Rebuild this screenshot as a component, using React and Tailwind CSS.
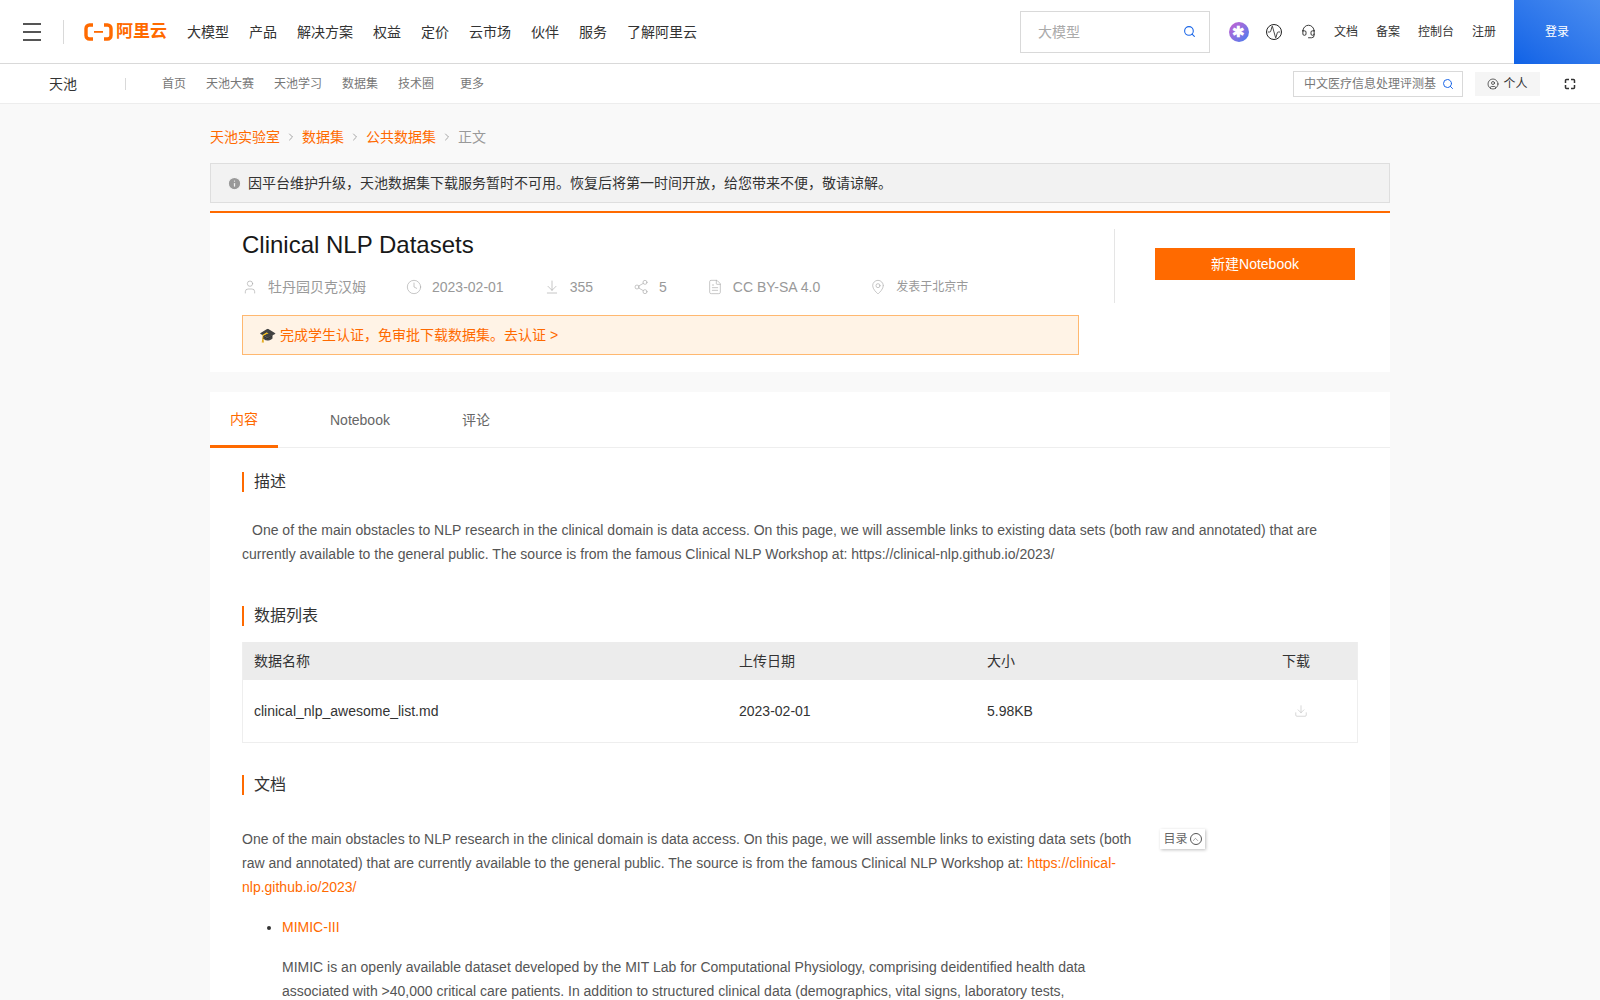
import { Search, User, Clock, ArrowDownToLine, Share2, FileText, MapPin, ChevronRight, ChevronUp, Info, Download, CircleUser, Headset, Activity } from "lucide-react";

const mainNav = ["大模型", "产品", "解决方案", "权益", "定价", "云市场", "伙伴", "服务", "了解阿里云"];
const subNav = [
  ["首页", "mr-5"],
  ["天池大赛", "mr-5"],
  ["天池学习", "mr-5"],
  ["数据集", "mr-5"],
  ["技术圈", "mr-[26px]"],
  ["更多", ""],
];

function Logo() {
  return (
    <div className="flex items-center gap-[3px] text-[#ff6a00]">
      <svg width="29" height="18" viewBox="0 0 29 18" fill="none">
        <path d="M9 2H5.5C3.5 2 2 3.5 2 5.5v7C2 14.5 3.5 16 5.5 16H9" stroke="#ff6a00" strokeWidth="3.4" />
        <path d="M20 2h3.500C25.500 2 27 3.500 27 5.500v7c0 2-1.500 3.500-3.500 3.500H20" stroke="#ff6a00" strokeWidth="3.400" />
        <rect x="10" y="8" width="9" height="1.800" fill="#ff6a00" />
      </svg>
      <span className="text-[17px] font-bold leading-none">阿里云</span>
    </div>
  );
}

function TopBar() {
  return (
    <header className="flex h-[64px] items-center border-b border-[#d9d9d9] bg-white">
      <div className="ml-[23px] flex w-[18px] flex-col gap-[6px]">
        <span className="h-[2px] bg-[#555]" />
        <span className="h-[2px] bg-[#555]" />
        <span className="h-[2px] bg-[#555]" />
      </div>
      <div className="ml-[22px] h-6 w-px bg-[#d9d9d9]" />
      <div className="ml-5">
        <Logo />
      </div>
      <nav className="ml-5 flex gap-5 text-sm text-[#333]">
        {mainNav.map((item) => (
          <span key={item}>{item}</span>
        ))}
      </nav>
      <div className="ml-auto flex h-[42px] w-[190px] items-center justify-between border border-[#d9d9d9] pl-[17px] pr-[13px] text-sm text-[#aaa]">
        <span>大模型</span>
        <Search size={13} color="#1a66e8" />
      </div>
      <div className="ml-[19px] flex h-5 w-5 items-center justify-center rounded-full bg-gradient-to-br from-[#c65bd0] to-[#2f7bf0] text-[15px] font-bold leading-none text-white">
        ✱
      </div>
      <Activity size={14} strokeWidth={1.4} color="#222" className="ml-[18px] rounded-full outline outline-1 outline-[#222]" />
      <Headset size={15} strokeWidth={1.4} color="#222" className="ml-[20px]" />
      <div className="ml-[18px] flex gap-[18px] text-xs text-[#333]">
        <span>文档</span>
        <span>备案</span>
        <span>控制台</span>
        <span>注册</span>
      </div>
      <button className="ml-[18px] h-[64px] w-[86px] bg-gradient-to-tr from-[#0f62e6] to-[#4a8df0] text-xs text-white">登录</button>
    </header>
  );
}

function SubBar() {
  return (
    <div className="flex h-[40px] items-center border-b border-[#ededed] bg-white">
      <span className="ml-[49px] text-sm text-[#333]">天池</span>
      <div className="ml-12 h-3 w-px bg-[#d9d9d9]" />
      <nav className="ml-9 flex text-xs text-[#777]">
        {subNav.map(([item, cls]) => (
          <span key={item} className={cls}>{item}</span>
        ))}
      </nav>
      <div className="ml-auto flex h-[26px] w-[170px] items-center justify-between border border-[#d9d9d9] pl-[10px] pr-2 text-xs text-[#777]">
        <span className="w-[132px] overflow-hidden whitespace-nowrap">中文医疗信息处理评测基准</span>
        <Search size={12} color="#1a66e8" />
      </div>
      <div className="ml-3 flex h-6 w-[65px] items-center justify-center gap-1 bg-[#f5f5f5] text-xs text-[#333]">
        <CircleUser size={12} strokeWidth={1.5} />
        <span>个人</span>
      </div>
      <svg className="ml-[24px] mr-[24px]" width="12" height="12" viewBox="0 0 12 12" fill="none" stroke="#333" strokeWidth="1.5">
        <path d="M5 1.500H2.500a1 1 0 0 0-1 1V5M7 1.500h2.500a1 1 0 0 1 1 1V5M5 10.500H2.500a1 1 0 0 1-1-1V7M7 10.500h2.500a1 1 0 0 0 1-1V7" />
      </svg>
    </div>
  );
}

function Breadcrumb() {
  const Sep = () => <ChevronRight size={12} strokeWidth={1.5} color="#888" className="mx-[5px]" />;
  return (
    <div className="flex h-[20px] items-center text-sm text-[#ff6a00]">
      <span>天池实验室</span>
      <Sep />
      <span>数据集</span>
      <Sep />
      <span>公共数据集</span>
      <Sep />
      <span className="text-[#999]">正文</span>
    </div>
  );
}

function MetaItem({ icon: Icon, children, className = "" }) {
  return (
    <div className={`flex items-center gap-[10px] ${className}`}>
      <Icon size={16} strokeWidth={1} color="#aaa" />
      {children}
    </div>
  );
}

function SectionTitle({ children }) {
  return (
    <h3 className="border-l-2 border-[#ff6a00] pl-[10px] text-base leading-5 text-[#333]">{children}</h3>
  );
}

function DatasetHead() {
  return (
    <section className="border-t-2 border-[#ff6a00] bg-white pb-[17px] pl-8 pr-[35px] pt-4">
      <div className="flex">
        <div className="w-[837px] shrink-0">
          <h1 className="text-2xl leading-8 text-[#181818]">Clinical NLP Datasets</h1>
          <div className="mt-[10px] flex h-8 items-center gap-10 text-sm text-[#999]">
            <MetaItem icon={User}>牡丹园贝克汉姆</MetaItem>
            <MetaItem icon={Clock}>2023-02-01</MetaItem>
            <MetaItem icon={ArrowDownToLine}>355</MetaItem>
            <MetaItem icon={Share2}>5</MetaItem>
            <MetaItem icon={FileText}>CC BY-SA 4.0</MetaItem>
            <MetaItem icon={MapPin} className="ml-[10px]">
              <span className="text-xs">发表于北京市</span>
            </MetaItem>
          </div>
          <div className="mt-[12px] flex h-10 items-center border border-[#ffb870] bg-[#fff3e6] px-4 text-sm text-[#ff6a00]">
            <span className="mr-1 text-[#333]">🎓</span>
            完成学生认证，免审批下载数据集。去认证 &gt;
          </div>
        </div>
        <div className="ml-[35px] h-[74px] border-l border-[#e5e5e5] pl-10 pt-[19px]">
          <button className="h-8 w-[200px] bg-[#ff6a00] text-sm text-white">新建Notebook</button>
        </div>
      </div>
    </section>
  );
}

function DataTable() {
  return (
    <div className="mt-[16px] border border-t-0 border-[#eeeeee] text-sm text-[#333]">
      <div className="grid h-[38px] grid-cols-[485px_248px_295px_1fr] items-center bg-[#ececec] pl-[11px]">
        <span>数据名称</span>
        <span>上传日期</span>
        <span>大小</span>
        <span>下载</span>
      </div>
      <div className="grid h-[62px] grid-cols-[485px_248px_295px_1fr] items-center pl-[11px]">
        <span>clinical_nlp_awesome_list.md</span>
        <span>2023-02-01</span>
        <span>5.98KB</span>
        <Download size={14} strokeWidth={1} color="#bbb" className="ml-[12px]" />
      </div>
    </div>
  );
}

function DocBody() {
  return (
    <div className="relative mt-[32px] w-[918px] text-sm leading-6 text-[#555]">
      <p className="w-[900px]">
        One of the main obstacles to NLP research in the clinical domain is data access. On this page, we will assemble links to existing data sets (both raw and annotated) that are currently available to the general public. The source is from the famous Clinical NLP Workshop at:{" "}
        <span className="text-[#ff6a00]">https://clinical-nlp.github.io/2023/</span>
      </p>
      <div className="absolute left-[918px] top-[2px] flex h-5 w-[45px] items-center justify-center gap-[2px] bg-white text-xs text-[#666] shadow-[1px_1px_3px_rgba(0,0,0,0.25)]">
        目录
        <span className="flex h-3 w-3 items-center justify-center rounded-full border border-[#555]">
          <ChevronUp size={9} strokeWidth={1.5} />
        </span>
      </div>
      <ul className="mt-4 list-disc pl-10">
        <li className="text-[#ff6a00] marker:text-[#333]">MIMIC-III</li>
      </ul>
      <p className="mt-4 w-[880px] pl-10">
        MIMIC is an openly available dataset developed by the MIT Lab for Computational Physiology, comprising deidentified health data associated with &gt;40,000 critical care patients. In addition to structured clinical data (demographics, vital signs, laboratory tests, medications, etc.), it
      </p>
    </div>
  );
}

export default function App() {
  return (
    <div className="h-[1000px] overflow-hidden bg-[#f9f9f9] font-['Liberation_Sans','Noto_Sans_CJK_SC',sans-serif]">
      <TopBar />
      <SubBar />
      <main className="mx-auto w-[1180px] pt-[23px]">
        <Breadcrumb />
        <div className="mt-[16px] flex h-10 items-center gap-[6px] border border-[#dedede] bg-[#f2f2f2] px-4 text-sm text-[#333]">
          <Info size={15} color="#f2f2f2" fill="#999" />
          因平台维护升级，天池数据集下载服务暂时不可用。恢复后将第一时间开放，给您带来不便，敬请谅解。
        </div>
        <div className="mt-2">
          <DatasetHead />
        </div>
        <section className="mt-5 bg-white">
          <div className="flex h-[56px] border-b border-[#eeeeee] text-sm text-[#666]">
            <span className="flex h-[56px] w-[68px] items-center justify-center border-b-[3px] border-[#ff6a00] text-[#ff6a00]">内容</span>
            <span className="ml-[52px] flex items-center">Notebook</span>
            <span className="ml-[72px] flex items-center">评论</span>
          </div>
          <div className="px-8 pt-6">
            <SectionTitle>描述</SectionTitle>
            <p className="mt-[26px] indent-[10px] text-sm leading-6 text-[#555]">
              One of the main obstacles to NLP research in the clinical domain is data access. On this page, we will assemble links to existing data sets (both raw and annotated) that are currently available to the general public. The source is from the famous Clinical NLP Workshop at: https://clinical-nlp.github.io/2023/
            </p>
            <div className="mt-[40px]">
              <SectionTitle>数据列表</SectionTitle>
            </div>
            <DataTable />
            <div className="mt-[32px]">
              <SectionTitle>文档</SectionTitle>
            </div>
            <DocBody />
          </div>
        </section>
      </main>
    </div>
  );
}
